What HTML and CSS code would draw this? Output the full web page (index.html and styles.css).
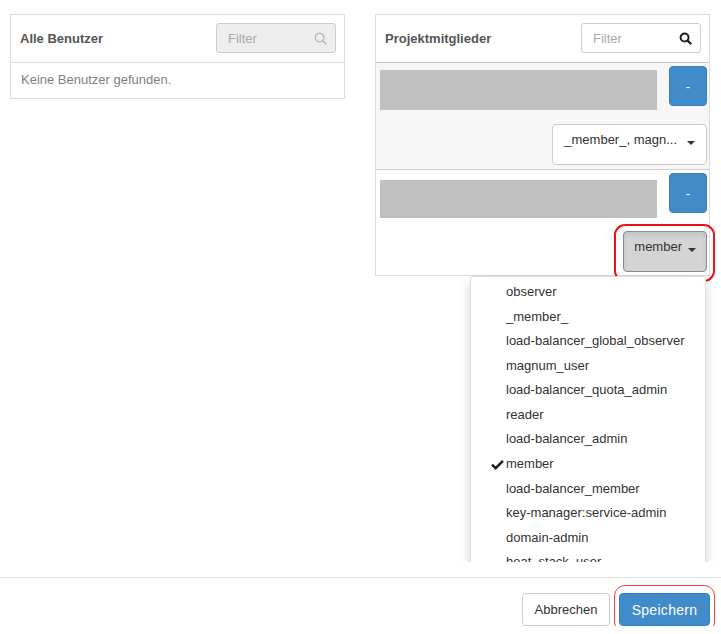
FILE: index.html
```html
<!DOCTYPE html>
<html lang="de">
<head>
<meta charset="utf-8">
<title>Projektmitglieder</title>
<link rel="stylesheet" href="styles.css">
</head>
<body>
<div class="modal-body">
  <div class="columns">
    <section class="panel">
      <div class="panel-head">
        <span class="panel-title">Alle Benutzer</span>
        <div class="filter filter-disabled">
          <span class="placeholder">Filter</span>
          <svg class="search light" width="13" height="13" viewBox="0 0 14 14"><circle cx="6" cy="6" r="4.6" fill="none" stroke="currentColor" stroke-width="1.4"/><line x1="9.4" y1="9.4" x2="12.8" y2="12.8" stroke="currentColor" stroke-width="1.6" stroke-linecap="round"/></svg>
        </div>
      </div>
      <div class="panel-empty">Keine Benutzer gefunden.</div>
    </section>
    <section class="panel">
      <div class="panel-head">
        <span class="panel-title">Projektmitglieder</span>
        <div class="filter">
          <span class="placeholder">Filter</span>
          <svg class="search dark" width="13" height="13" viewBox="0 0 14 14"><circle cx="6" cy="6" r="4.3" fill="none" stroke="currentColor" stroke-width="2.2"/><line x1="9.2" y1="9.2" x2="12.4" y2="12.4" stroke="currentColor" stroke-width="2.6" stroke-linecap="round"/></svg>
        </div>
      </div>
      <div class="member odd">
        <div class="member-top">
          <div class="redacted"></div>
          <button class="btn btn-primary btn-minus">-</button>
        </div>
        <div class="member-roles">
          <button class="btn btn-default btn-roles btn-roles-wide">_member_, magn... <span class="caret"></span></button>
        </div>
      </div>
      <div class="member">
        <div class="member-top">
          <div class="redacted second"></div>
          <button class="btn btn-primary btn-minus">-</button>
        </div>
        <div class="member-roles">
          <div class="dropdown">
            <button class="btn btn-default btn-roles active highlight">member <span class="caret"></span></button>
            <ul class="dropdown-menu">
              <li>observer</li>
              <li>_member_</li>
              <li>load-balancer_global_observer</li>
              <li>magnum_user</li>
              <li>load-balancer_quota_admin</li>
              <li>reader</li>
              <li>load-balancer_admin</li>
              <li class="checked"><svg class="check" width="13" height="11" viewBox="0 0 13 11"><path d="M1 5.6 L4.6 9.2 L12 1.8" fill="none" stroke="currentColor" stroke-width="2.6" stroke-linejoin="miter"/></svg>member</li>
              <li>load-balancer_member</li>
              <li>key-manager:service-admin</li>
              <li>domain-admin</li>
              <li>heat_stack_user</li>
            </ul>
          </div>
        </div>
      </div>
    </section>
  </div>
</div>
<div class="modal-footer">
  <button class="btn btn-default btn-footer btn-cancel">Abbrechen</button>
  <button class="btn btn-primary btn-footer btn-save highlight-soft">Speichern</button>
</div>
</body>
</html>
```
FILE: styles.css
```css
* { box-sizing: border-box; }
html, body { margin: 0; padding: 0; background: #fff; }
body {
  font-family: "Liberation Sans", Arial, sans-serif;
  font-size: 13px;
  color: #333;
  width: 721px;
}
.modal-body {
  height: 562px;
  overflow: hidden;
}
.columns {
  display: flex;
  gap: 30px;
  padding: 14px 0 0 10px;
  align-items: flex-start;
}
.panel {
  width: 335px;
  border: 1px solid #dcdcdc;
  background: #fff;
}
.panel-head {
  height: 48px;
  display: flex;
  align-items: center;
  justify-content: space-between;
  padding: 0 8px 1px 9px;
  border-bottom: 1px solid #dcdcdc;
}
.panel + .panel .panel-head { border-bottom-color: #c8c8c8; }
.panel-title {
  font-weight: bold;
  color: #555;
}
.filter {
  width: 120px;
  height: 30px;
  border: 1px solid #ccc;
  border-radius: 3px;
  display: flex;
  align-items: center;
  justify-content: space-between;
  padding: 0 8px 0 11px;
  background: #fff;
}
.filter-disabled { background: #eee; }
.placeholder { color: #a9a9a9; }
.search.light { color: #b5b5b5; }
.search.dark { color: #222; }
.panel-empty {
  height: 35px;
  line-height: 33px;
  padding: 0 10px;
  color: #808080;
}
.member {
  padding: 3px 2px 3px 4px;
  border-bottom: 1px solid #cfcfcf;
  background: #fff;
}
.member:last-child { border-bottom: none; }
.member.odd { background: #f7f7f7; padding-bottom: 4px; }
.member-top {
  display: flex;
  align-items: flex-start;
  gap: 12px;
  height: 40px;
}
.redacted {
  flex: 1;
  height: 40px;
  margin-top: 4px;
  background: #c0c0c0;
}
.redacted.second { height: 38px; margin-top: 7px; }
.member-roles {
  display: flex;
  justify-content: flex-end;
  margin-top: 18px;
}
.btn {
  font-family: inherit;
  font-size: 13px;
  border: 1px solid transparent;
  border-radius: 4px;
  cursor: pointer;
  margin: 0;
}
.btn-primary {
  background: #428bca;
  border-color: #3a80bf;
  color: #fff;
}
.btn-default {
  background: #fff;
  border-color: #ccc;
  color: #333;
}
.btn-minus {
  width: 38px;
  height: 40px;
  padding: 0;
}
.btn-roles {
  height: 41px;
  padding: 6px 10px 0;
  line-height: 1.42857143;
  display: flex;
  align-items: flex-start;
  gap: 6px;
}
.btn-roles-wide {
  padding: 6px 11px 0;
  gap: 10px;
}
.btn-roles.active {
  background: #d4d4d4;
  border-color: #8c8c8c;
  box-shadow: inset 0 3px 5px rgba(0,0,0,0.08);
}
.caret {
  display: inline-block;
  width: 0;
  height: 0;
  margin-top: 10px;
  border-top: 4px solid #333;
  border-left: 4px solid transparent;
  border-right: 4px solid transparent;
}
.dropdown { position: relative; }
.highlight { position: relative; }
.highlight::after {
  content: "";
  position: absolute;
  top: -8px; bottom: -11px; left: -10px; right: -9px;
  border: 2px solid #ee1111;
  border-radius: 11px;
  pointer-events: none;
}
.dropdown-menu {
  position: absolute;
  top: 100%;
  right: 1px;
  margin: 4px 0 0;
  width: 236px;
  padding: 3px 0 5px;
  list-style: none;
  background: #fff;
  border: 1px solid rgba(0,0,0,0.12);
  border-radius: 3px;
  box-shadow: 0 6px 12px rgba(0,0,0,0.175);
  z-index: 10;
}
.dropdown-menu li {
  padding: 3px 20px 3px 35px;
  line-height: 1.42857143;
  white-space: nowrap;
  color: #333;
  position: relative;
}
.check {
  position: absolute;
  left: 20px;
  top: 7px;
  color: #222;
}
.modal-footer {
  margin-top: 15px;
  border-top: 1px solid #e5e5e5;
  padding: 15px 11px 0 0;
  display: flex;
  justify-content: flex-end;
  gap: 9px;
}
.btn-footer {
  height: 33px;
  padding: 0 12px;
}
.btn-cancel { width: 88px; padding: 0; }
.btn-save {
  width: 91px;
  padding: 0;
  font-size: 14px;
  letter-spacing: 0.3px;
}
.highlight-soft { position: relative; }
.highlight-soft::after {
  content: "";
  position: absolute;
  top: -9px; bottom: -8px; left: -6px; right: -6px;
  border: 1px solid #ee4444;
  border-radius: 11px;
  pointer-events: none;
}
```
